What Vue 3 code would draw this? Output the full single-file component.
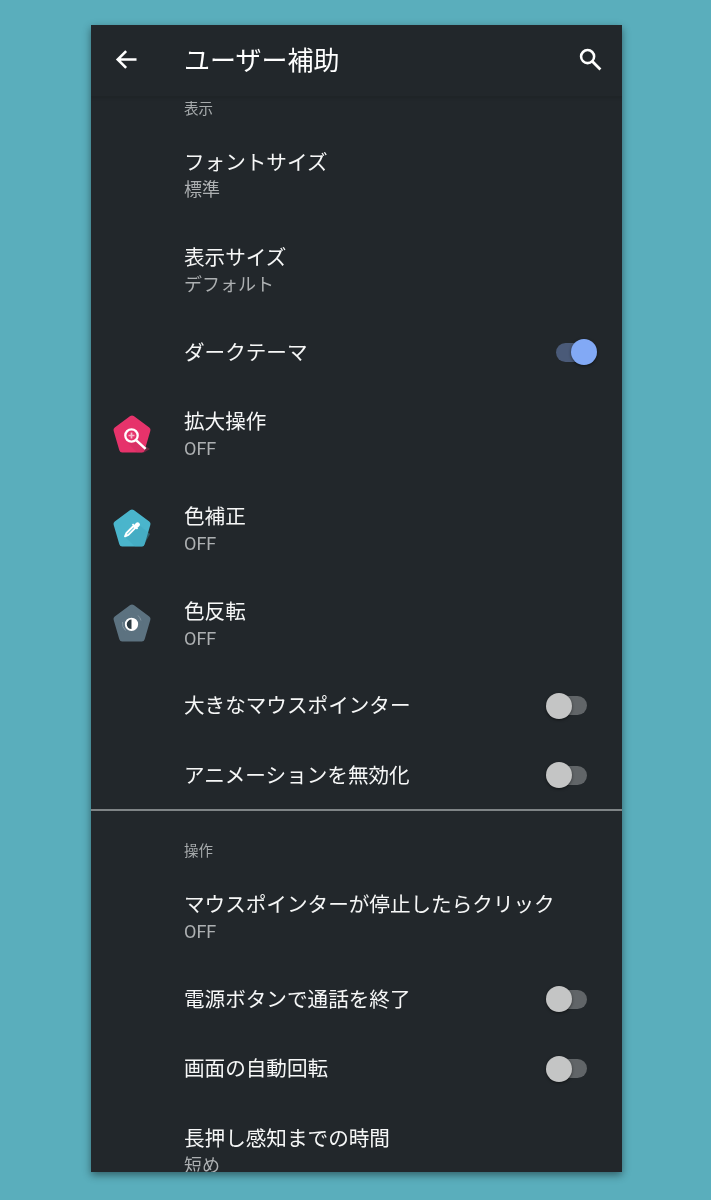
<script setup>
const sections = [
  {
    title: '表示', cls: 'first',
    rows: [
      { t: 'フォントサイズ', s: '標準' },
      { t: '表示サイズ', s: 'デフォルト' },
      { t: 'ダークテーマ', toggle: 'on' },
      { t: '拡大操作', s: 'OFF', icon: 'zoom' },
      { t: '色補正', s: 'OFF', icon: 'drop' },
      { t: '色反転', s: 'OFF', icon: 'invert' },
      { t: '大きなマウスポインター', toggle: 'off' },
      { t: 'アニメーションを無効化', toggle: 'off' },
    ],
  },
  {
    title: '操作', cls: 'second',
    rows: [
      { t: 'マウスポインターが停止したらクリック', s: 'OFF' },
      { t: '電源ボタンで通話を終了', toggle: 'off' },
      { t: '画面の自動回転', toggle: 'off' },
      { t: '長押し感知までの時間', s: '短め' },
    ],
  },
]
</script>

<template>
  <div class="page">
    <div class="phone">
      <header class="bar">
        <svg class="back" viewBox="0 0 24 24" width="29" height="29">
          <path d="M20.300 12H5.500M11.700 5 4.700 12l7 7" fill="none" stroke="#fff" stroke-width="2.100" />
        </svg>
        <h1 class="heading">ユーザー補助</h1>
        <svg class="search" viewBox="0 0 24 24" width="29" height="29">
          <circle cx="9.600" cy="9.600" r="5.400" fill="none" stroke="#fff" stroke-width="2.100" />
          <path d="m13.600 13.600 6.600 6.600" fill="none" stroke="#fff" stroke-width="2.300" />
        </svg>
      </header>
      <section v-for="sec in sections" :key="sec.title" class="section" :class="sec.cls">
        <div class="sec-title">{{ sec.title }}</div>
        <div v-for="r in sec.rows" :key="r.t" class="row" :class="{ two: r.s }">
          <div class="lead">
            <svg v-if="r.icon" viewBox="0 0 40 40" width="40" height="40">
              <template v-if="r.icon === 'zoom'">
                <path class="pent" fill="#e6336b" stroke="#e6336b" d="M20 4.500 35.500 15.800 29.800 35.500H10.200L4.500 15.800Z" />
                <path d="M25 27 38 35 32 38.500H25L16 29Z" fill="#c92c5e" opacity=".4" />
                <circle cx="19.500" cy="21.500" r="6.200" fill="none" stroke="#fff" stroke-width="2.300" />
                <path d="M19.500 18.500v6M16.500 21.500h6" stroke="#f6b9cc" stroke-width="1.700" />
                <path d="m24.300 26.300 9.300 8.600" stroke="#fff" stroke-width="2.500" />
              </template>
              <template v-else-if="r.icon === 'drop'">
                <path class="pent" fill="#4ab5cc" stroke="#4ab5cc" d="M20 4.500 35.500 15.800 29.800 35.500H10.200L4.500 15.800Z" />
                <path d="M26 16 38 26 31 38.500H23L14 30Z" fill="#3fa3ba" opacity=".4" />
                <path d="M21.500 18 14.500 25l-1.500 3.400 3.400-1.500 7-7Z" fill="none" stroke="#fff" stroke-width="1.900" stroke-linejoin="round" />
                <path d="m20.500 16 5 5M22.500 18l2.200-2.600a1.500 1.500 0 0 1 2.100 2.100L24.300 19.800Z" fill="#fff" stroke="#fff" stroke-width="1.700" />
              </template>
              <template v-else>
                <path class="pent" fill="#5c7280" stroke="#5c7280" d="M20 4.500 35.500 15.800 29.800 35.500H10.200L4.500 15.800Z" />
                <circle cx="19.500" cy="21.300" r="5.700" fill="#2c3a42" stroke="#fff" stroke-width="1.900" />
                <path d="M19.500 15.600a5.700 5.700 0 0 1 0 11.400Z" fill="#fff" />
                <path d="M10.500 19a9.500 9.500 0 0 0 3 8.500M26 12.500a10 10 0 0 1 3 5" fill="none" stroke="#8496a1" stroke-width="1" />
              </template>
            </svg>
          </div>
          <div class="texts">
            <div class="title">{{ r.t }}</div>
            <div v-if="r.s" class="sub">{{ r.s }}</div>
          </div>
          <div v-if="r.toggle" class="toggle" :class="r.toggle"><span class="thumb"></span></div>
        </div>
      </section>
    </div>
  </div>
</template>

<style>
html, body { margin: 0; background: #5aaebc; }
</style>

<style scoped>
.page {
  box-sizing: border-box;
  width: 711px;
  height: 1200px;
  padding: 25px 89px 28px 91px;
  background: #5aaebc;
  overflow: hidden;
  font-family: "Roboto", "Noto Sans CJK JP", sans-serif;
}
.phone {
  height: 1147px;
  background: #22272b;
  overflow: hidden;
  box-shadow: 0 3px 8px rgba(0, 0, 0, .45);
  filter: blur(.35px);
}
.bar {
  display: flex;
  align-items: center;
  height: 71px;
  padding: 0 17px 0 21px;
  border-bottom: 1px solid #1f2427;
  box-shadow: 0 1px 3px rgba(0, 0, 0, .12);
}
.back { flex: none; margin-top: -3px; }
.search { flex: none; margin-top: -3px; }
.heading {
  flex: 1;
  margin: 0 0 0 43px;
  padding-top: 1px;
  font-size: 26px;
  font-weight: 400;
  line-height: 1;
  color: #fff;
}
.section { display: flex; flex-direction: column; }
.second { border-top: 2px solid #7f8486; margin-top: -1px; }
.sec-title {
  display: flex;
  align-items: flex-end;
  box-sizing: border-box;
  padding: 0 0 11px 93px;
  font-size: 14.500px;
  line-height: 14px;
  color: #a6aaac;
}
.first .sec-title { height: 31px; }
.second .sec-title { height: 59px; }
.row {
  display: flex;
  align-items: center;
  height: 69.500px;
  padding-right: 35px;
}
.row.two { height: 94.700px; }
.lead {
  flex: none;
  display: flex;
  align-items: center;
  justify-content: center;
  width: 81px;
  margin-right: 12px;
  padding-bottom: 1px;
}
.pent { stroke-width: 6; stroke-linejoin: round; }
.texts { flex: 1; min-width: 0; padding-top: 2px; }
.two .texts { padding-top: 3px; }
.title {
  font-size: 20.600px;
  line-height: 27px;
  color: #f6f7f7;
  white-space: nowrap;
}
.sub {
  font-size: 18px;
  line-height: 26px;
  color: #adb0b2;
}
.toggle {
  position: relative;
  flex: none;
  width: 28px;
  height: 19px;
  border-radius: 10px;
  background: #616568;
}
.toggle.on { margin-right: 3px; background: #4a5a78; }
.thumb {
  position: absolute;
  top: -3.500px;
  left: -13px;
  width: 26px;
  height: 26px;
  border-radius: 50%;
  background: #c4c5c5;
  box-shadow: 0 1px 3px rgba(0, 0, 0, .5);
}
.on .thumb {
  left: 15px;
  background: #82a9f5;
}
</style>
